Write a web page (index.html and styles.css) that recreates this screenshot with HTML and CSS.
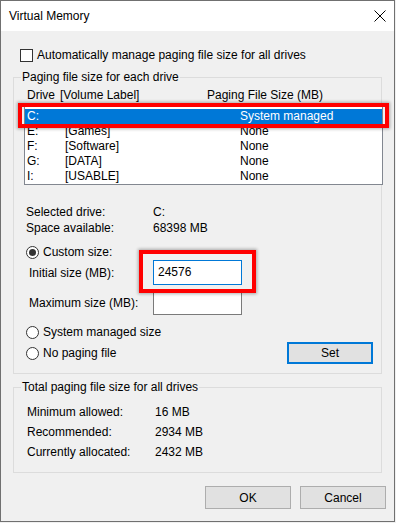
FILE: index.html
```html
<html>
<head>
	<link rel="stylesheet" href="styles.css">
</head>
<body>
	<div class="window">
		<div class="titlebar">
			<span class="title">Virtual Memory</span>
			<svg class="close" width="12" height="12" viewBox="0 0 12 12">
				<path d="M0.5 0.5 L11.5 11.5 M11.5 0.5 L0.5 11.5" stroke="#000" stroke-width="1" fill="none" />
			</svg>
		</div>
		<div class="auto">
			<span class="checkbox"></span>
			<span>Automatically manage paging file size for all drives</span>
		</div>
		<fieldset class="group">
			<legend>Paging file size for each drive</legend>
			<div class="list-head">
				<span>Drive</span>
				<span>[Volume Label]</span>
				<span>Paging File Size (MB)</span>
			</div>
			<div class="list">
				<div class="row selected"><span>C:</span><span></span><span>System managed</span></div>
				<div class="row"><span>E:</span><span>[Games]</span><span>None</span></div>
				<div class="row"><span>F:</span><span>[Software]</span><span>None</span></div>
				<div class="row"><span>G:</span><span>[DATA]</span><span>None</span></div>
				<div class="row"><span>I:</span><span>[USABLE]</span><span>None</span></div>
			</div>
			<div class="drive-info">
				<span>Selected drive:</span><span>C:</span>
				<span>Space available:</span><span>68398 MB</span>
			</div>
			<div class="option custom">
				<span class="radio checked"></span>
				<span>Custom size:</span>
			</div>
			<div class="field-row">
				<span class="field-label">Initial size (MB):</span>
				<div class="input focused">24576</div>
			</div>
			<div class="field-row max">
				<span class="field-label">Maximum size (MB):</span>
				<div class="input"></div>
			</div>
			<div class="option system">
				<span class="radio"></span>
				<span>System managed size</span>
			</div>
			<div class="last-row">
				<div class="option">
					<span class="radio"></span>
					<span>No paging file</span>
				</div>
				<div class="button set">Set</div>
			</div>
		</fieldset>
		<fieldset class="group totals-group">
			<legend>Total paging file size for all drives</legend>
			<div class="totals">
				<span>Minimum allowed:</span><span>16 MB</span>
				<span>Recommended:</span><span>2934 MB</span>
				<span>Currently allocated:</span><span>2432 MB</span>
			</div>
		</fieldset>
		<div class="buttons">
			<div class="button">OK</div>
			<div class="button">Cancel</div>
		</div>
		<div class="mark mark-list"></div>
		<div class="mark mark-input"></div>
	</div>
</body>
</html>
```

FILE: styles.css
```css
body {
	margin: 0;
	background: #f0f0f0;
}

.window {
	position: relative;
	width: 393px;
	height: 520px;
	border: 1px solid #707070;
	background: #f0f0f0;
	font: 12px "Liberation Sans", Arial, sans-serif;
	color: #000;
}

.titlebar {
	display: flex;
	align-items: center;
	justify-content: space-between;
	height: 30px;
	padding: 0 8px;
	background: #fff;
}
.title{
	font-size: 12px;
}
.close{
	display: block;
}

.auto {
	display: flex;
	align-items: center;
	gap: 4px;
	height: 14px;
	margin: 17px 0 0 19px;
}
.checkbox {
	width: 13px;
	height: 13px;
	box-sizing: border-box;
	border: 1px solid #333;
	background: #fff;
}

.group {
	margin: 8px 12px 0;
	padding: 0 0 9px;
	border: 1px solid #dcdcdc;
	min-width: 0;
}
.group legend {
	margin-left: 7px;
	padding: 0 1px;
	line-height: 15px;
}

.list-head {
	display: grid;
	grid-template-columns: 33px 147px 1fr;
	margin: 2px 0 0 13px;
	line-height: 16px;
}

.list {
	margin: 2px -2px 0 10px;
	padding-top: 3px;
	border: 1px solid #828790;
	background: #fff;
}
.row {
	display: grid;
	grid-template-columns: 38px 175px 1fr;
	height: 15px;
	line-height: 15px;
	padding-left: 2px;
}
.row.selected {
	background: #0078d7;
	color: #fff;
}

.drive-info {
	display: grid;
	grid-template-columns: 127px 1fr;
	margin: 19px 0 0 12px;
	line-height: 16px;
}

.option {
	display: flex;
	align-items: center;
	gap: 4px;
}
.custom {
	margin: 9px 0 0 12px;
	line-height: 15px;
}
.system {
	margin: 9px 0 0 12px;
	line-height: 16px;
}
.radio {
	position: relative;
	width: 13px;
	height: 13px;
	box-sizing: border-box;
	border: 1px solid #333;
	border-radius: 50%;
	background: #fff;
}
.radio.checked::after {
	content: "";
	position: absolute;
	left: 2px;
	top: 2px;
	width: 7px;
	height: 7px;
	border-radius: 50%;
	background: #333;
}

.field-row {
	display: flex;
	align-items: center;
	height: 25px;
	margin-left: 15px;
}
.field-row.max {
	margin-top: 5px;
}
.field-label {
	width: 124px;
}
.input {
	width: 89px;
	height: 25px;
	box-sizing: border-box;
	border: 1px solid #7a7a7a;
	background: #fff;
	padding-left: 4px;
	line-height: 23px;
}
.input.focused {
	border-color: #0078d7;
}

.last-row {
	display: flex;
	align-items: center;
	justify-content: space-between;
	height: 22px;
	margin: 2px 8px 0 12px;
}

.button {
	width: 86px;
	height: 23px;
	box-sizing: border-box;
	border: 1px solid #adadad;
	background: #e1e1e1;
	display: flex;
	align-items: center;
	justify-content: center;
}
.button.set {
	height: 22px;
	border: 2px solid #0078d7;
}

.totals-group {
	margin-top: 6px;
	padding-bottom: 10px;
}
.totals {
	display: grid;
	grid-template-columns: 128px 1fr;
	margin: 7px 0 0 13px;
	line-height: 20px;
}

.buttons {
	display: flex;
	justify-content: flex-end;
	gap: 9px;
	margin: 13px 8px 0 0;
}

.mark {
	position: absolute;
	box-sizing: border-box;
	border: 4px solid #ff0000;
	box-shadow: 0 0 3px 1px rgba(0, 0, 0, 0.3);
}
.mark-list {
	left: 17px;
	top: 102px;
	width: 371px;
	height: 25px;
}
.mark-input {
	left: 138px;
	top: 249px;
	width: 117px;
	height: 43px;
}
```
